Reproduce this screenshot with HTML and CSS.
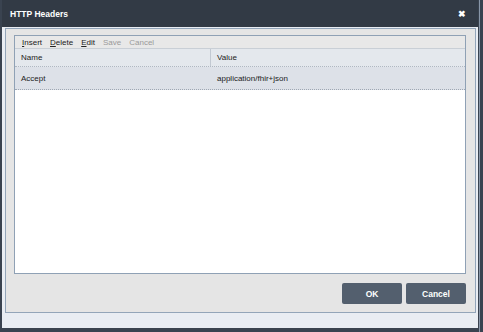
FILE: index.html
```html
<!DOCTYPE html>
<html>
<head>
<meta charset="utf-8">
<link rel="stylesheet" href="styles.css">
</head>
<body>
<div class="dialog">
  <div class="titlebar">
    <span class="title">HTTP Headers</span>
    <span class="close">&#x2716;</span>
  </div>
  <div class="panel">
    <div class="grid">
      <div class="toolbar">
        <span class="tb"><u>I</u>nsert</span>
        <span class="tb"><u>D</u>elete</span>
        <span class="tb"><u>E</u>dit</span>
        <span class="tb disabled">Save</span>
        <span class="tb disabled">Cancel</span>
      </div>
      <div class="header">
        <div class="cell c1">Name</div>
        <div class="cell c2">Value</div>
      </div>
      <div class="row">
        <div class="cell c1">Accept</div>
        <div class="cell c2">application/fhir+json</div>
      </div>
    </div>
    <div class="buttons">
      <button class="btn">OK</button>
      <button class="btn">Cancel</button>
    </div>
  </div>
</div>
</body>
</html>
```
FILE: styles.css
```css
html, body {
  margin: 0;
  padding: 0;
}
body {
  width: 483px;
  height: 332px;
  overflow: hidden;
  background: linear-gradient(to right, #3a4350 0, #3a4350 479px, #8896a8 479px, #8896a8 480px, #3a4350 480px);
  font-family: "Liberation Sans", Arial, sans-serif;
}
.dialog {
  margin-left: 2px;
  width: 476px;
  height: 328px;
  background: #e9edf3;
  display: flex;
  flex-direction: column;
  box-sizing: border-box;
}
.titlebar {
  height: 27px;
  flex: none;
  background: #323a45;
  color: #fff;
  display: flex;
  align-items: center;
  justify-content: space-between;
  padding: 0 12px 0 8px;
  box-sizing: border-box;
}
.title {
  font-size: 8.5px;
  font-weight: bold;
}
.close {
  font-size: 8.5px;
  font-weight: bold;
}
.panel {
  margin: 1px 2px 0 3px;
  height: 285px;
  box-sizing: border-box;
  border: 1px solid #93a5b9;
  background: #e5e5e5;
  padding: 6px 9px 8px 8px;
  display: flex;
  flex-direction: column;
}
.grid {
  flex: 1;
  border: 1px solid #8fa1b5;
  background: #fff;
  display: flex;
  flex-direction: column;
}
.toolbar {
  height: 12px;
  background: #e8e8e8;
  display: flex;
  align-items: center;
  gap: 8px;
  padding-left: 7px;
  font-size: 8px;
  color: #222;
}
.tb u {
  text-decoration: underline;
}
.tb.disabled {
  color: #9a9a9a;
}
.header {
  height: 19px;
  background: #e4e8ed;
  border-top: 1px solid #c9cfd6;
  border-bottom: 1px dotted #b0b8c2;
  display: flex;
  font-size: 8px;
  color: #222;
  box-sizing: border-box;
}
.row {
  height: 23px;
  background: #dde1e8;
  border-bottom: 1px dotted #9ea7b3;
  display: flex;
  font-size: 8px;
  color: #222;
  box-sizing: border-box;
}
.cell {
  display: flex;
  align-items: center;
  box-sizing: border-box;
}
.c1 {
  width: 196px;
  padding-left: 6px;
}
.header .c1 {
  border-right: 1px solid #c2c9d2;
}
.c2 {
  flex: 1;
  padding-left: 6px;
}
.buttons {
  display: flex;
  justify-content: flex-end;
  gap: 4px;
  margin-top: 9px;
}
.btn {
  width: 60px;
  height: 21px;
  border: none;
  border-radius: 2px;
  background: #535f6e;
  color: #fff;
  font-family: "Liberation Sans", Arial, sans-serif;
  font-size: 8.5px;
  font-weight: bold;
  padding: 0;
}
```
